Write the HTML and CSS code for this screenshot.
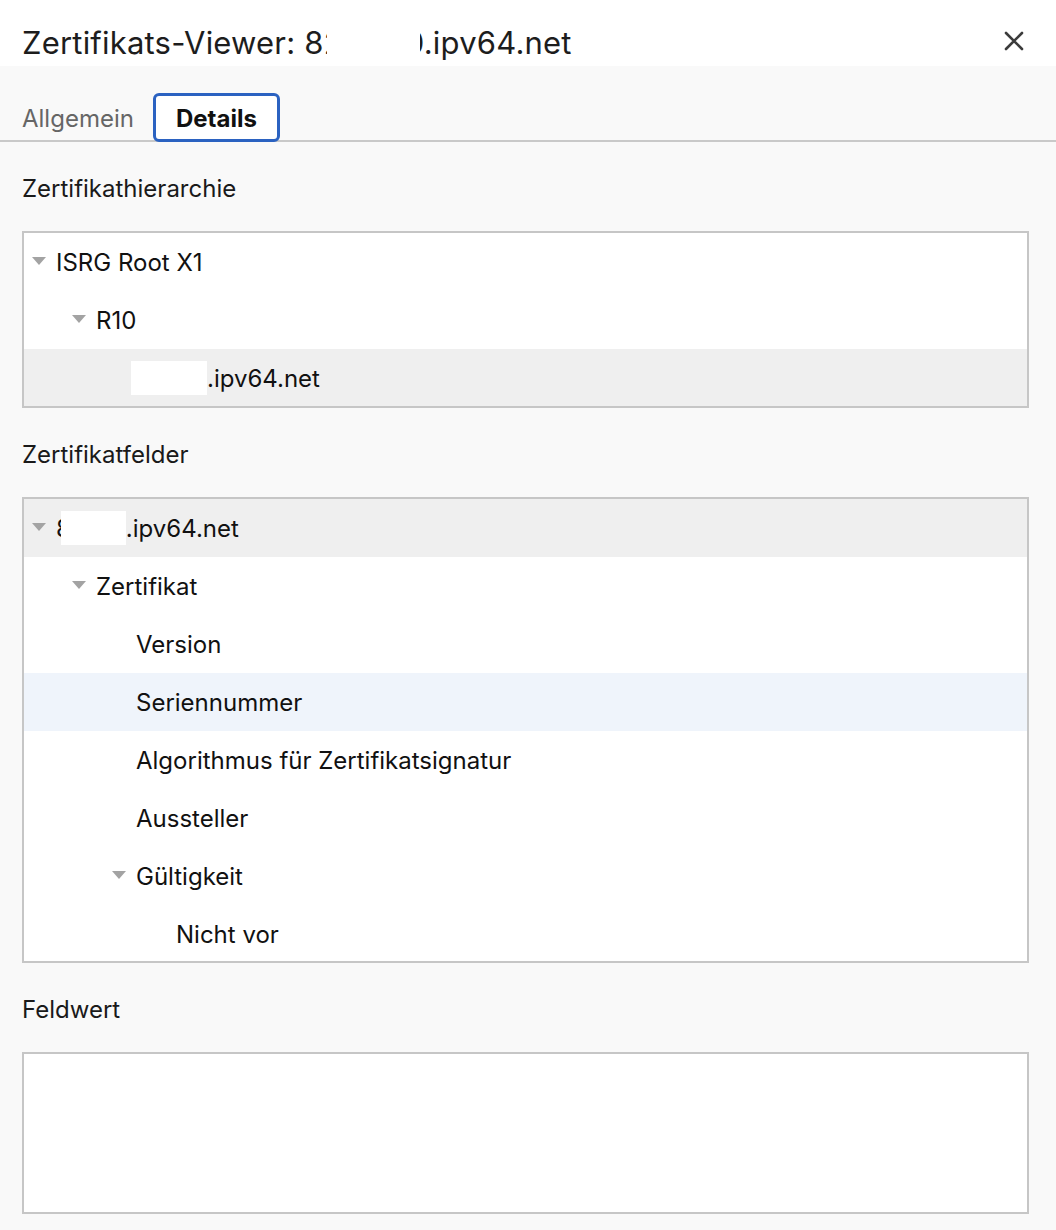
FILE: index.html
```html
<!DOCTYPE html>
<html lang="de">
<head>
<meta charset="utf-8">
<title>Zertifikats-Viewer</title>
<link rel="stylesheet" href="styles.css">
</head>
<body>
<div class="dialog">
  <header class="titlebar">
    <h1 class="title">Zertifikats-Viewer: 82<span class="mask-title"></span>0.ipv64.net</h1>
    <button class="close" aria-label="Schließen">
      <svg width="20" height="20" viewBox="0 0 20 20"><path d="M2 2 L18 18 M18 2 L2 18" stroke="#3c3c3c" stroke-width="2.6" stroke-linecap="round" fill="none"/></svg>
    </button>
  </header>
  <main class="content">
    <nav class="tabs">
      <div class="tab">Allgemein</div>
      <div class="tab active">Details</div>
    </nav>

    <div class="label">Zertifikathierarchie</div>
    <div class="tree box-hier">
      <div class="row lvl1"><span class="tri"></span>ISRG Root X1</div>
      <div class="row lvl2"><span class="tri"></span>R10</div>
      <div class="row lvl3 selected"><span class="redact r1"></span>.ipv64.net</div>
    </div>

    <div class="label">Zertifikatfelder</div>
    <div class="tree box-fields">
      <div class="row lvl1 selected"><span class="tri"></span>8<span class="redact r2"></span>.ipv64.net</div>
      <div class="row lvl2"><span class="tri"></span>Zertifikat</div>
      <div class="row lvl3">Version</div>
      <div class="row lvl3 hover">Seriennummer</div>
      <div class="row lvl3">Algorithmus für Zertifikatsignatur</div>
      <div class="row lvl3">Aussteller</div>
      <div class="row lvl3t"><span class="tri"></span>Gültigkeit</div>
      <div class="row lvl4">Nicht vor</div>
    </div>

    <div class="label">Feldwert</div>
    <div class="value-box"></div>
  </main>
</div>
</body>
</html>
```

FILE: styles.css
```css
* { box-sizing: border-box; }
html, body { margin: 0; padding: 0; }
body {
  font-family: "Inter", "Noto Sans", sans-serif;
  color: #1a1a1a;
  background: #f9f9f9;
}
.dialog { width: 1056px; height: 1230px; background: #f9f9f9; }
.titlebar {
  height: 66px;
  background: #ffffff;
  display: flex;
  align-items: flex-start;
  justify-content: space-between;
  padding: 0 32px 0 22px;
}
.title {
  margin: 25px 0 0;
  font-size: 31px;
  line-height: 36px;
  letter-spacing: 0.2px;
  font-weight: 400;
  color: #1d1d1d;
  white-space: nowrap;
}
.mask-title {
  display: inline-block;
  position: relative;
  vertical-align: middle;
  width: 93px;
  height: 40px;
  margin-left: -16px;
  margin-right: -15px;
  background: #ffffff;
}
.close {
  background: none;
  border: 0;
  padding: 0;
  margin-top: 31px;
  width: 20px;
  height: 20px;
  display: flex;
}
.content {
  padding: 0 27px 0 22px;
  background: #f9f9f9;
}
.tabs {
  display: flex;
  align-items: flex-end;
  height: 76px;
  border-bottom: 2px solid #c9c9c9;
  margin: 0 -27px 0 -22px;
  padding-left: 22px;
}
.tab {
  font-size: 24px;
  color: #666666;
  height: 49px;
  line-height: 51px;
  margin-bottom: -2px;
}
.tab.active {
  margin-left: 19px;
  padding: 0 20px;
  border: 3px solid #2b62c1;
  border-radius: 6px;
  line-height: 45px;
  font-weight: 700;
  color: #111111;
  background: #ffffff;
}
.label {
  font-size: 24px;
  line-height: 30px;
  margin: 32px 0 27px;
  color: #1a1a1a;
}
.tree {
  background: #ffffff;
  border: 2px solid #c6c6c6;
  overflow: hidden;
}
.box-hier { height: 177px; }
.box-fields { height: 466px; }
.row {
  height: 58px;
  flex: none;
  display: flex;
  align-items: center;
  font-size: 24px;
  color: #111111;
  white-space: nowrap;
}
.row.selected { background: #efefef; }
.row.hover { background: #eff4fb; }
.tri {
  width: 0;
  height: 0;
  border-left: 7px solid transparent;
  border-right: 7px solid transparent;
  border-top: 8px solid #a3a3a3;
  margin-left: 1px;
  margin-right: 10px;
  position: relative;
  top: -1px;
}
.lvl1 { padding-left: 7px; }
.lvl2 { padding-left: 47px; }
.lvl3 { padding-left: 112px; }
.lvl3t { padding-left: 87px; }
.lvl4 { padding-left: 152px; }
.redact {
  display: inline-block;
  position: relative;
  background: #ffffff;
  height: 34px;
}
.r1 { width: 76px; margin-left: -5px; }
.r2 { width: 65px; margin-left: -10px; }
.value-box {
  height: 162px;
  background: #ffffff;
  border: 2px solid #c6c6c6;
}
```
